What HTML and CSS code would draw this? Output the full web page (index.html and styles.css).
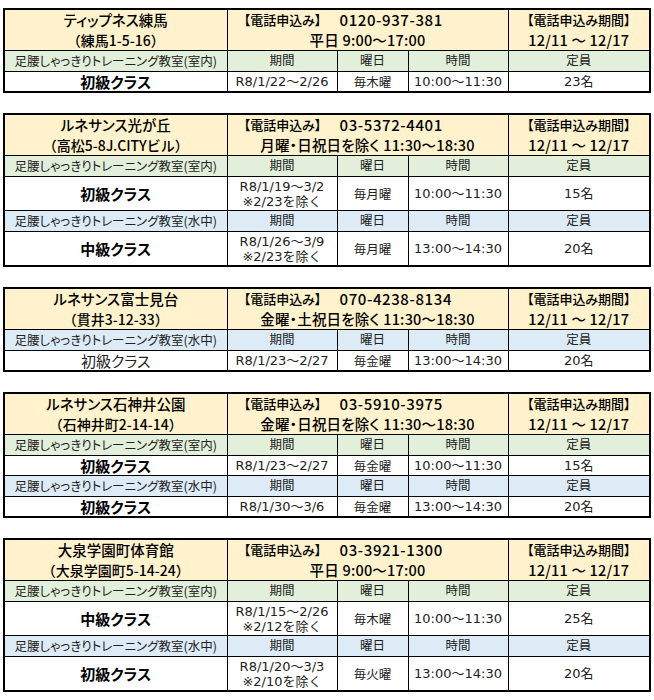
FILE: index.html
```html
<!DOCTYPE html>
<html lang="ja">
<head>
<meta charset="utf-8">
<link rel="stylesheet" href="styles.css">
</head>
<body>

<table class="course">
  <colgroup><col class="c1"><col class="c2"><col class="c3"><col class="c4"><col class="c5"></colgroup>
  <tr class="head">
    <td class="name"><div class="ln ttl">ティップネス練馬</div><div class="ln">（練馬1-5-16）</div></td>
    <td class="tel" colspan="3"><div class="ln tel1"><span class="tl">【電話申込み】</span><span class="num">0120-937-381</span></div><div class="ln">平日 9:00～17:00</div></td>
    <td class="period"><div class="ln ptl">【電話申込み期間】</div><div class="ln">12/11 ～ 12/17</div></td>
  </tr>
  <tr class="sub green"><td class="label">足腰しゃっきりトレーニング教室(室内)</td><td>期間</td><td>曜日</td><td>時間</td><td>定員</td></tr>
  <tr class="row"><td class="cls">初級クラス</td><td>R8/1/22～2/26</td><td class="day">毎木曜</td><td>10:00～11:30</td><td>23名</td></tr>
</table>

<table class="course">
  <colgroup><col class="c1"><col class="c2"><col class="c3"><col class="c4"><col class="c5"></colgroup>
  <tr class="head">
    <td class="name"><div class="ln ttl">ルネサンス光が丘</div><div class="ln">（高松5-8J.CITYビル）</div></td>
    <td class="tel" colspan="3"><div class="ln tel1"><span class="tl">【電話申込み】</span><span class="num">03-5372-4401</span></div><div class="ln">月曜・日祝日を除く 11:30～18:30</div></td>
    <td class="period"><div class="ln ptl">【電話申込み期間】</div><div class="ln">12/11 ～ 12/17</div></td>
  </tr>
  <tr class="sub green"><td class="label">足腰しゃっきりトレーニング教室(室内)</td><td>期間</td><td>曜日</td><td>時間</td><td>定員</td></tr>
  <tr class="row two"><td class="cls">初級クラス</td><td><div class="pl">R8/1/19～3/2</div><div class="pl">※2/23を除く</div></td><td class="day">毎月曜</td><td>10:00～11:30</td><td>15名</td></tr>
  <tr class="sub blue"><td class="label">足腰しゃっきりトレーニング教室(水中)</td><td>期間</td><td>曜日</td><td>時間</td><td>定員</td></tr>
  <tr class="row two"><td class="cls">中級クラス</td><td><div class="pl">R8/1/26～3/9</div><div class="pl">※2/23を除く</div></td><td class="day">毎月曜</td><td>13:00～14:30</td><td>20名</td></tr>
</table>

<table class="course">
  <colgroup><col class="c1"><col class="c2"><col class="c3"><col class="c4"><col class="c5"></colgroup>
  <tr class="head">
    <td class="name"><div class="ln ttl">ルネサンス富士見台</div><div class="ln">（貫井3-12-33）</div></td>
    <td class="tel" colspan="3"><div class="ln tel1"><span class="tl">【電話申込み】</span><span class="num">070-4238-8134</span></div><div class="ln">金曜・土祝日を除く 11:30～18:30</div></td>
    <td class="period"><div class="ln ptl">【電話申込み期間】</div><div class="ln">12/11 ～ 12/17</div></td>
  </tr>
  <tr class="sub blue"><td class="label">足腰しゃっきりトレーニング教室(水中)</td><td>期間</td><td>曜日</td><td>時間</td><td>定員</td></tr>
  <tr class="row"><td class="cls plain">初級クラス</td><td>R8/1/23～2/27</td><td class="day">毎金曜</td><td>13:00～14:30</td><td>20名</td></tr>
</table>

<table class="course">
  <colgroup><col class="c1"><col class="c2"><col class="c3"><col class="c4"><col class="c5"></colgroup>
  <tr class="head">
    <td class="name"><div class="ln ttl">ルネサンス石神井公園</div><div class="ln">（石神井町2-14-14）</div></td>
    <td class="tel" colspan="3"><div class="ln tel1"><span class="tl">【電話申込み】</span><span class="num">03-5910-3975</span></div><div class="ln">金曜・日祝日を除く 11:30～18:30</div></td>
    <td class="period"><div class="ln ptl">【電話申込み期間】</div><div class="ln">12/11 ～ 12/17</div></td>
  </tr>
  <tr class="sub green"><td class="label">足腰しゃっきりトレーニング教室(室内)</td><td>期間</td><td>曜日</td><td>時間</td><td>定員</td></tr>
  <tr class="row"><td class="cls">初級クラス</td><td>R8/1/23～2/27</td><td class="day">毎金曜</td><td>10:00～11:30</td><td>15名</td></tr>
  <tr class="sub blue"><td class="label">足腰しゃっきりトレーニング教室(水中)</td><td>期間</td><td>曜日</td><td>時間</td><td>定員</td></tr>
  <tr class="row"><td class="cls">初級クラス</td><td>R8/1/30～3/6</td><td class="day">毎金曜</td><td>13:00～14:30</td><td>20名</td></tr>
</table>

<table class="course">
  <colgroup><col class="c1"><col class="c2"><col class="c3"><col class="c4"><col class="c5"></colgroup>
  <tr class="head">
    <td class="name"><div class="ln ttl">大泉学園町体育館</div><div class="ln">（大泉学園町5-14-24）</div></td>
    <td class="tel" colspan="3"><div class="ln tel1"><span class="tl">【電話申込み】</span><span class="num">03-3921-1300</span></div><div class="ln">平日 9:00～17:00</div></td>
    <td class="period"><div class="ln ptl">【電話申込み期間】</div><div class="ln">12/11 ～ 12/17</div></td>
  </tr>
  <tr class="sub green"><td class="label">足腰しゃっきりトレーニング教室(室内)</td><td>期間</td><td>曜日</td><td>時間</td><td>定員</td></tr>
  <tr class="row two"><td class="cls">中級クラス</td><td><div class="pl">R8/1/15～2/26</div><div class="pl">※2/12を除く</div></td><td class="day">毎木曜</td><td>10:00～11:30</td><td>25名</td></tr>
  <tr class="sub blue"><td class="label">足腰しゃっきりトレーニング教室(水中)</td><td>期間</td><td>曜日</td><td>時間</td><td>定員</td></tr>
  <tr class="row two"><td class="cls">初級クラス</td><td><div class="pl">R8/1/20～3/3</div><div class="pl">※2/10を除く</div></td><td class="day">毎火曜</td><td>13:00～14:30</td><td>20名</td></tr>
</table>

</body>
</html>
```

FILE: styles.css
```css
html, body {
  margin: 0;
  background: #ffffff;
}
body {
  padding: 8px 0 0 3px;
  font-family: "DejaVu Sans", "Noto Sans CJK JP", sans-serif;
  color: #111;
}
.course {
  border-collapse: collapse;
  table-layout: fixed;
  width: 646px;
  border: 2px solid #000;
  margin: 0 0 20px 0;
}
.c1 { width: 223px; }
.c2 { width: 110px; }
.c3 { width: 71px; }
.c4 { width: 100px; }
.c5 { width: 142px; }

.course td {
  border: 1px solid #000;
  padding: 0;
  text-align: center;
  vertical-align: middle;
  white-space: nowrap;
  overflow: hidden;
}

.head td {
  background: #fff2cc;
  font-family: "Noto Sans CJK JP", sans-serif;
  font-weight: 500;
  color: #000;
}
.ln {
  height: 20px;
  line-height: 20px;
}
.name .ln {
  font-size: 14px;
}
.name .ttl {
  font-size: 14.5px;
  font-feature-settings: "palt";
}
.tel .ln, .period .ln {
  font-size: 14.5px;
  font-feature-settings: "palt";
  letter-spacing: 0.2px;
}
.period .ptl {
  font-size: 13px;
  letter-spacing: 0;
}
.tel1 {
  display: flex;
  text-align: left;
}
.tel1 .tl {
  width: 110px;
  flex: none;
  text-align: center;
  font-size: 13px;
  letter-spacing: 0;
}
.tel1 .num {
  padding-left: 2px;
  font-size: 15px;
  letter-spacing: 0.6px;
}

.sub td {
  font-size: 12.5px;
  line-height: 20px;
  height: 20px;
  color: #222;
}
.sub .label {
  font-family: "Noto Sans CJK JP", sans-serif;
  font-size: 12.5px;
  font-feature-settings: "palt";
}
.green td { background: #e2efda; }
.blue td { background: #ddebf7; }

.row td {
  font-size: 13px;
  line-height: 19px;
  height: 19px;
  background: #fff;
  color: #222;
}
.row.two td {
  height: 33px;
}
.pl {
  line-height: 15px;
}
.row .cls {
  font-family: "Noto Sans CJK JP", sans-serif;
  font-weight: 700;
  font-size: 15px;
  font-feature-settings: "palt";
  color: #000;
}
.row .cls.plain {
  font-weight: 400;
  color: #222;
}
.row .day {
  font-family: "Noto Sans CJK JP", sans-serif;
  font-size: 12.5px;
}
```
